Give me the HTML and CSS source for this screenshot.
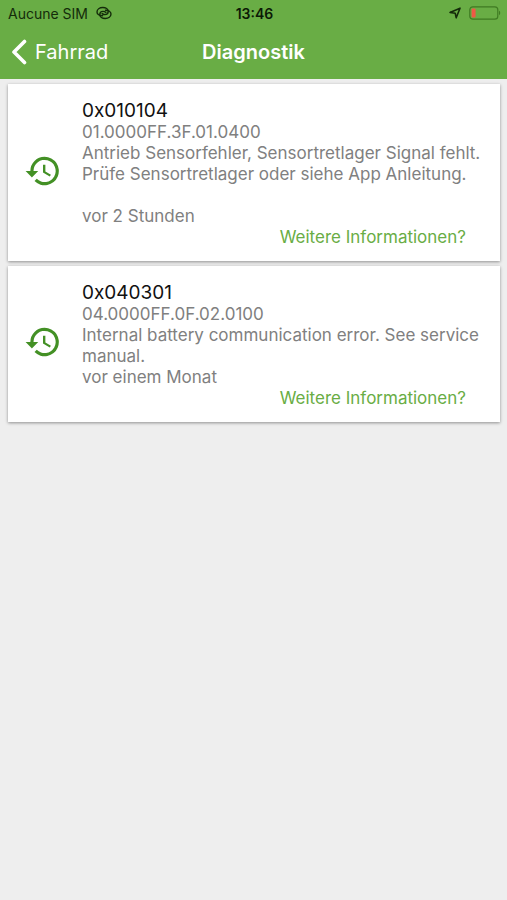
FILE: index.html
```html
<!DOCTYPE html>
<html lang="de">
<head>
<meta charset="utf-8">
<meta name="viewport" content="width=device-width, initial-scale=1">
<title>Diagnostik</title>
<link rel="stylesheet" href="styles.css">
</head>
<body>
<header class="top">
  <div class="status">
    <div class="carrier">
      <span>Aucune SIM</span>
      <svg class="link-icon" viewBox="0 0 16 14" aria-hidden="true">
        <g fill="none" stroke="currentColor" stroke-width="1.400" stroke-linecap="round">
          <path d="M6.500 9.700C3.500 9.900 1 8.300 1 5.900c0-2.500 2.600-4.400 5.800-4.400 3 0 5.400 1.700 5.400 4 0 1.700-1.400 3.100-3.200 3.100-1.200 0-2.200-.4-2.900-1"/>
          <path d="M9.500 4.300c3-.2 5.500 1.400 5.500 3.800 0 2.500-2.600 4.400-5.800 4.400-3 0-5.400-1.700-5.400-4 0-1.700 1.400-3.100 3.200-3.100 1.200 0 2.200.4 2.900 1"/>
        </g>
      </svg>
    </div>
    <time class="clock">13:46</time>
    <div class="indicators">
      <svg class="location-icon" viewBox="0 0 12 12" aria-hidden="true">
        <path d="M1 5.400 11 1.200 7.200 10.800 6.200 6.200z" fill="none" stroke="currentColor" stroke-width="1.600" stroke-linejoin="round"/>
      </svg>
      <svg class="battery-icon" viewBox="0 0 32 14" aria-hidden="true">
        <rect x=".8" y=".8" width="28" height="12.400" rx="3" fill="none" stroke="#3f7a22" stroke-width="1.200"/>
        <rect x="2.600" y="2.600" width="4" height="8.800" rx="1" fill="#ee5a45"/>
        <path d="M30 4.800c1.600.5 1.600 3.900 0 4.400z" fill="#3f7a22"/>
      </svg>
    </div>
  </div>
  <nav class="navbar">
    <a class="back" href="#">
      <svg class="back-icon" viewBox="0 0 16 26" aria-hidden="true">
        <path d="M13.500 2.500 3 13l10.500 10.500" fill="none" stroke="currentColor" stroke-width="3.600" stroke-linecap="round" stroke-linejoin="round"/>
      </svg>
      <span>Fahrrad</span>
    </a>
    <h1 class="title">Diagnostik</h1>
  </nav>
</header>
<main class="list">
  <article class="card">
    <svg class="history-icon" viewBox="0 0 24 24" aria-hidden="true">
      <path fill="currentColor" d="M13 3a9 9 0 0 0-9 9H1l3.890 3.890.07.14L9 12H6a7 7 0 1 1 2.060 4.940l-1.420 1.420A9 9 0 1 0 13 3zm-1 5v5l4.280 2.540.72-1.210-3.500-2.080V8z"/>
    </svg>
    <div class="content">
      <h2 class="code">0x010104</h2>
      <p>01.0000FF.3F.01.0400</p>
      <p class="message">Antrieb Sensorfehler, Sensortretlager Signal fehlt.
Prüfe Sensortretlager oder siehe App Anleitung.

</p>
      <p>vor 2 Stunden</p>
      <a class="more" href="#">Weitere Informationen?</a>
    </div>
  </article>
  <article class="card">
    <svg class="history-icon" viewBox="0 0 24 24" aria-hidden="true">
      <path fill="currentColor" d="M13 3a9 9 0 0 0-9 9H1l3.890 3.890.07.14L9 12H6a7 7 0 1 1 2.060 4.940l-1.420 1.420A9 9 0 1 0 13 3zm-1 5v5l4.280 2.540.72-1.210-3.500-2.080V8z"/>
    </svg>
    <div class="content">
      <h2 class="code">0x040301</h2>
      <p>04.0000FF.0F.02.0100</p>
      <p class="message">Internal battery communication error. See service manual.</p>
      <p>vor einem Monat</p>
      <a class="more" href="#">Weitere Informationen?</a>
    </div>
  </article>
</main>
</body>
</html>
```
FILE: styles.css
```css
* {
  box-sizing: border-box;
}

body {
  margin: 0;
  min-height: 100vh;
  background: #eeeeee;
  color: #808080;
  font: 17px/21px Inter, "Liberation Sans", sans-serif;
}

h1, h2, p {
  margin: 0;
}

a {
  text-decoration: none;
}

.top {
  background: #69ad45;
  padding-bottom: 1px;
}

.status,
.navbar {
  display: grid;
  grid-template-columns: 1fr auto 1fr;
  align-items: center;
}

.status {
  height: 26px;
  padding: 0 6px 0 8px;
  color: #142b0a;
  font-size: 14px;
}

.carrier,
.indicators,
.back {
  display: flex;
  align-items: center;
  gap: 8px;
}

.indicators {
  justify-content: flex-end;
}

.link-icon {
  width: 16px;
  height: 14px;
}

.location-icon {
  width: 12px;
  height: 12px;
}

.battery-icon {
  width: 32px;
  height: 14px;
}

.clock {
  color: #0c1a06;
  font-weight: 600;
}

.navbar {
  height: 52px;
  padding: 0 11px;
  color: #ffffff;
}

.back {
  color: inherit;
  font-size: 20px;
}

.back-icon {
  width: 16px;
  height: 26px;
}

.title {
  font-size: 20px;
  font-weight: 600;
}

.list {
  display: flex;
  flex-direction: column;
  gap: 5px;
  padding: 5px 7px 5px 8px;
}

.card {
  display: flex;
  align-items: center;
  gap: 20px;
  padding: 15px 16px 13px;
  background: #ffffff;
  box-shadow: 0 1px 3px rgba(0, 0, 0, 0.4);
}

.history-icon {
  flex: none;
  width: 38px;
  height: 38px;
  margin-bottom: 6px;
  color: #439025;
}

.content {
  flex: 1;
  display: flex;
  flex-direction: column;
}

.code {
  color: #111111;
  font-size: 19px;
  font-weight: 400;
  line-height: 23px;
}

.message {
  white-space: pre-line;
}

.more {
  align-self: flex-end;
  margin-right: 18px;
  color: #69ad45;
}
```
